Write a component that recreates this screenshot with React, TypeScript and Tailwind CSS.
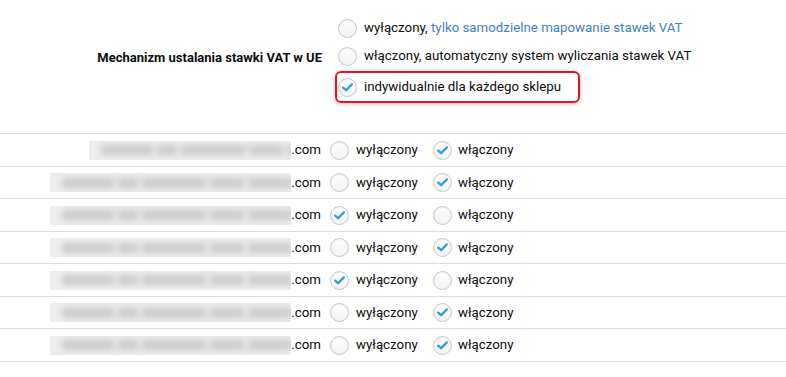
import React from "react";

function Radio({ checked }: { checked?: boolean }) {
  return (
    <span className="flex h-[19px] w-[19px] shrink-0 items-center justify-center rounded-full border border-[#c6c9cc] bg-gradient-to-b from-white to-[#f1f2f3] shadow-[inset_0_1px_2px_rgba(0,0,0,0.06)]">
      {checked && (
        <svg width="11" height="9" viewBox="0 0 11 9">
          <path d="M1.2 4.6 L4.1 7.2 L9.8 1.4" fill="none" stroke="#2f9bd8" strokeWidth="2.3" strokeLinecap="round" strokeLinejoin="round" />
        </svg>
      )}
    </span>
  );
}

const rows: { w: number; off: boolean }[] = [
  { w: 202, off: false },
  { w: 241, off: false },
  { w: 241, off: true },
  { w: 241, off: false },
  { w: 241, off: true },
  { w: 241, off: false },
  { w: 241, off: false },
];

const heights = ["h-[33px]", "h-[32px]", "h-[33px]", "h-[32px]", "h-[33px]", "h-[32px]", "h-[33px]"];

const segs = [52, 20, 64, 34, 44, 30];

export default function App() {
  return (
    <div className="h-[377px] w-[786px] overflow-hidden bg-white text-[13.3px] text-[#0d0d0d]" style={{ fontFamily: "Roboto, 'Liberation Sans', sans-serif" }}>
      <div className="flex h-[134px] border-b border-[#dddddd] pt-[14px]">
        <div className="w-[322px] pt-[34px] text-right text-[13px] font-bold text-[#0d0d0d]">Mechanizm ustalania stawki VAT w UE</div>
        <div className="ml-[16px] flex flex-col">
          <div className="flex h-[28px] items-center gap-[7px]">
            <Radio />
            <span>
              wyłączony, <span className="text-[#3d83c4]">tylko samodzielne mapowanie stawek VAT</span>
            </span>
          </div>
          <div className="flex h-[28px] items-center gap-[7px]">
            <Radio />
            <span>włączony, automatyczny system wyliczania stawek VAT</span>
          </div>
          <div className="-ml-[3px] mt-[1px] flex h-[32px] w-[245px] items-center gap-[7px] rounded-[6px] border-2 border-[#e8141c] pl-[1px] shadow-[0_1px_4px_rgba(0,0,0,0.25)]">
            <Radio checked />
            <span>indywidualnie dla każdego sklepu</span>
          </div>
        </div>
      </div>
      {rows.map((r, i) => (
        <div key={i} className={`flex items-center border-b border-[#dddddd] ${heights[i]}`}>
          <div className="flex w-[321px] items-center justify-end">
            <div className="flex h-[19px] items-center gap-[4px] overflow-hidden bg-[#ededed] pl-[12px]" style={{ width: r.w }}>
              {segs.map((s, j) => (
                <div key={j} className="h-[10px] shrink-0 bg-[#cbcbcb] blur-[3px]" style={{ width: s }} />
              ))}
            </div>
            <span>.com</span>
          </div>
          <div className="ml-[9px] flex w-[103px] items-center gap-[7px]">
            <Radio checked={r.off} />
            <span>wyłączony</span>
          </div>
          <div className="flex items-center gap-[6px]">
            <Radio checked={!r.off} />
            <span>włączony</span>
          </div>
        </div>
      ))}
    </div>
  );
}
